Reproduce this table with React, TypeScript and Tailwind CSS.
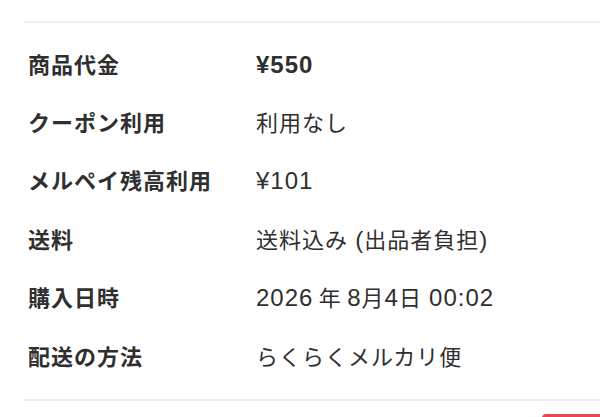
import React from "react";

interface Row {
  label: string;
  value: string;
  bold?: boolean;
}

const rows: Row[] = [
  { label: "商品代金", value: "¥550", bold: true },
  { label: "クーポン利用", value: "利用なし" },
  { label: "メルペイ残高利用", value: "¥101" },
  { label: "送料", value: "送料込み (出品者負担)" },
  { label: "購入日時", value: "2026\u2009年\u20098月4日 00:02" },
  { label: "配送の方法", value: "らくらくメルカリ便" },
];

// latin runs (digits, yen sign, colon, brackets) are set a bit larger, like the iOS system font
const renderValue = (text: string) =>
  text.split(/([0-9¥:()]+)/).map((part, i) =>
    /^[0-9¥:()]+$/.test(part) ? (
      <span key={i} className="text-[24px] leading-none">
        {part}
      </span>
    ) : (
      <span key={i}>{part}</span>
    )
  );

const App: React.FC = () => {
  return (
    <div
      className="w-[600px] h-[417px] bg-white overflow-hidden relative text-[#2f2f2f]"
      style={{ fontFamily: '"Liberation Sans", "Noto Sans CJK JP", sans-serif' }}
    >
      <div className="h-[21px]" />
      <div className="ml-[24px] border-t-2 border-[#efefef]">
        {/* Order details */}
        <div className="pt-[13px] pb-[13px]">
          {rows.map((row) => (
            <div key={row.label} className="flex items-center h-[58.4px] pl-[4px]">
              <div className="w-[228px] text-[22px] font-bold tracking-[1px]">
                {row.label}
              </div>
              <div
                className={`text-[22px] tracking-[1px] ${row.bold ? "font-bold" : "font-normal"}`}
              >
                {renderValue(row.value)}
              </div>
            </div>
          ))}
        </div>
        <div className="border-t-2 border-[#efefef]" />
      </div>
      <div className="absolute left-[542px] top-[414px] w-[70px] h-[10px] rounded-tl-[4px] bg-[#e84855]" />
    </div>
  );
};

export default App;
